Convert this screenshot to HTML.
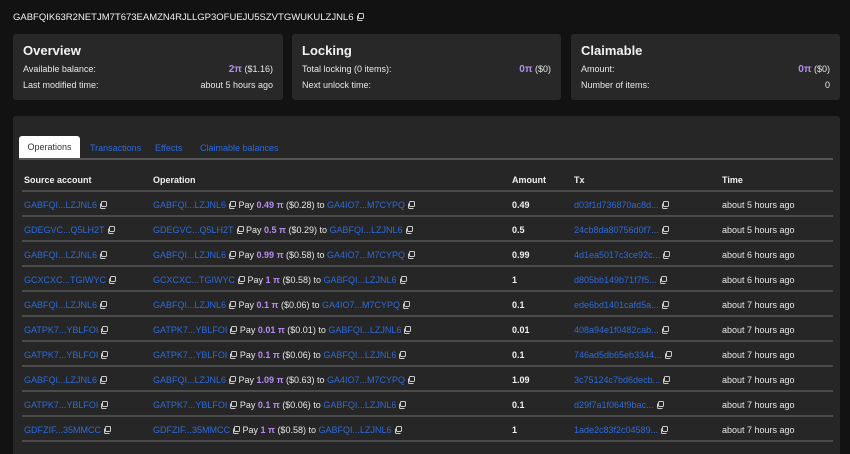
<!DOCTYPE html>
<html style="overflow:hidden;height:454px"><head><meta charset="utf-8"><style>
*{margin:0;padding:0;box-sizing:border-box}
body{width:850px;height:454px;background:#121212;color:#e8e8e8;font-family:"Liberation Sans",sans-serif;font-size:9px;position:relative;overflow:hidden}
.abs{position:absolute}
.card{position:absolute;top:34px;height:66px;background:#282828;border-radius:3px;padding:9px 10px}
.card h2{font-size:13px;font-weight:bold;color:#f2f2f2;margin-bottom:3px}
.kv{display:flex;justify-content:space-between;height:16px;align-items:center}
.p{color:#b68cf0;font-weight:bold;font-size:10px}
.panel{position:absolute;left:13px;top:116px;width:827px;height:338px;background:#262626;border-radius:3px 3px 0 0}
a{color:#2e6ad8;text-decoration:none}
.ic{display:inline-block;width:8px;height:8px;vertical-align:-1px;margin-left:2px}
.row{position:absolute;left:22px;width:811px;height:25px;border-bottom:2px solid #4a4a4a}
.row span.c{position:absolute;top:8px;white-space:nowrap}
.hd{font-weight:bold;color:#f0f0f0}
.pv{color:#b68cf0;font-weight:bold}
</style></head><body>
<svg width="0" height="0" style="position:absolute"><defs><symbol id="cp" viewBox="0 0 8 8"><rect x="2.5" y="0.5" width="5" height="5" rx="1" fill="none" stroke="#ccc" stroke-width="1"/><path d="M1.5 2.5 v4 a1 1 0 0 0 1 1 h4" fill="none" stroke="#ccc" stroke-width="1"/></symbol></defs></svg>
<div class="abs" style="left:13px;top:12px;font-size:9.5px;color:#f2f2f2">GABFQIK63R2NETJM7T673EAMZN4RJLLGP3OFUEJU5SZVTGWUKULZJNL6<svg class="ic"><use href="#cp"/></svg></div>
<div class="card" style="left:13px;width:270px"><h2>Overview</h2>
<div class="kv"><span>Available balance:</span><span><span class="p">2π</span> ($1.16)</span></div>
<div class="kv"><span>Last modified time:</span><span>about 5 hours ago</span></div></div>
<div class="card" style="left:292px;width:269px"><h2>Locking</h2>
<div class="kv"><span>Total locking (0 items):</span><span><span class="p">0π</span> ($0)</span></div>
<div class="kv"><span>Next unlock time:</span><span></span></div></div>
<div class="card" style="left:571px;width:269px"><h2>Claimable</h2>
<div class="kv"><span>Amount:</span><span><span class="p">0π</span> ($0)</span></div>
<div class="kv"><span>Number of items:</span><span>0</span></div></div>
<div class="panel"></div>
<div class="abs" style="left:19px;top:136px;width:61px;height:24px;background:#fff;border-radius:3px 3px 0 0;color:#333;text-align:center;line-height:23px">Operations</div>
<div class="abs" style="left:90px;top:143px;color:#2e6ad8">Transactions</div>
<div class="abs" style="left:155px;top:143px;color:#2e6ad8">Effects</div>
<div class="abs" style="left:200px;top:143px;color:#2e6ad8">Claimable balances</div>
<div class="abs" style="left:19px;top:158px;width:814px;height:2px;background:#555"></div>
<div class="row hd" style="top:167px"><span class="c" style="left:2px">Source account</span><span class="c" style="left:131px">Operation</span><span class="c" style="left:490px">Amount</span><span class="c" style="left:552px">Tx</span><span class="c" style="left:700px">Time</span></div>
<div id="rows"></div>
<script>
var d=[["GABFQI...LZJNL6","0.49","0.28","GA4IO7...M7CYPQ","d03f1d736870ac8d...","about 5 hours ago"],
["GDEGVC...Q5LH2T","0.5","0.29","GABFQI...LZJNL6","24cb8da80756d0f7...","about 5 hours ago"],
["GABFQI...LZJNL6","0.99","0.58","GA4IO7...M7CYPQ","4d1ea5017c3ce92c...","about 6 hours ago"],
["GCXCXC...TGIWYC","1","0.58","GABFQI...LZJNL6","d805bb149b71f7f5...","about 6 hours ago"],
["GABFQI...LZJNL6","0.1","0.06","GA4IO7...M7CYPQ","ede6bd1401cafd5a...","about 7 hours ago"],
["GATPK7...YBLFOI","0.01","0.01","GABFQI...LZJNL6","408a94e1f0482cab...","about 7 hours ago"],
["GATPK7...YBLFOI","0.1","0.06","GABFQI...LZJNL6","746ad5db65eb3344...","about 7 hours ago"],
["GABFQI...LZJNL6","1.09","0.63","GA4IO7...M7CYPQ","3c75124c7bd6decb...","about 7 hours ago"],
["GATPK7...YBLFOI","0.1","0.06","GABFQI...LZJNL6","d29f7a1f064f9bac...","about 7 hours ago"],
["GDFZIF...35MMCC","1","0.58","GABFQI...LZJNL6","1ade2c83f2c04589...","about 7 hours ago"]];
var ic='<svg class="ic"><use href="#cp"/></svg>',h='';
d.forEach(function(r,i){h+='<div class="row" style="top:'+(192+i*25)+'px"><span class="c" style="left:2px"><a>'+r[0]+'</a>'+ic+'</span><span class="c" style="left:131px"><a>'+r[0]+'</a>'+ic+' Pay <span class="pv">'+r[1]+' π</span> ($'+r[2]+') to <a>'+r[3]+'</a>'+ic+'</span><span class="c hd" style="left:490px">'+r[1]+'</span><span class="c" style="left:552px"><a>'+r[4]+'</a>'+ic+'</span><span class="c" style="left:700px">'+r[5]+'</span></div>';});
document.getElementById('rows').innerHTML=h;
</script>
</body></html>
